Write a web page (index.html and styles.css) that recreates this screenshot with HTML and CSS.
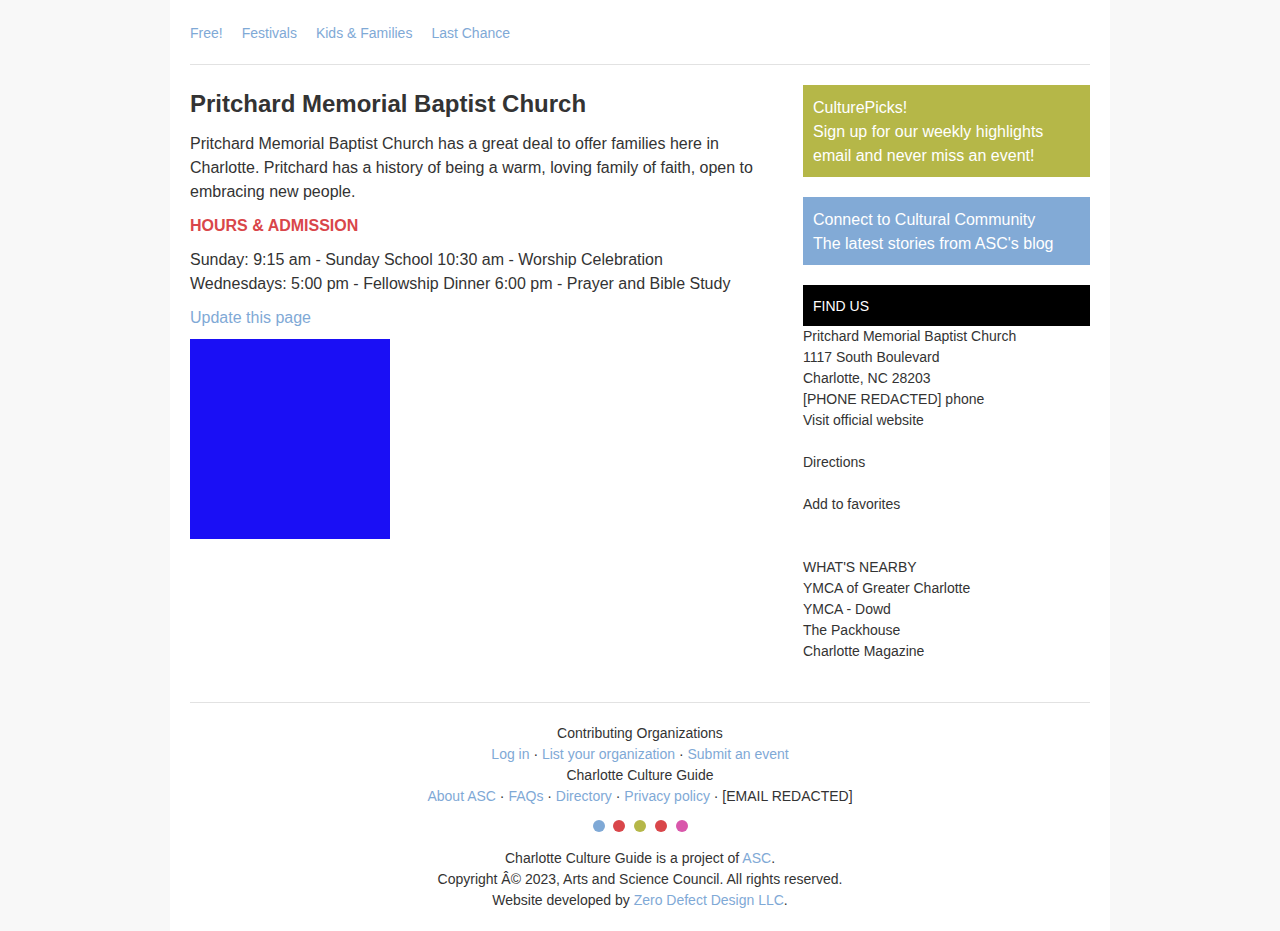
FILE: index.html
```html
<!DOCTYPE html>
<html lang="en">
<head>
<meta charset="utf-8">
<title>Pritchard Memorial Baptist Church</title>
<link rel="stylesheet" href="styles.css">
</head>
<body>
<div class="page">
  <nav class="topnav">
    <a href="#">Free!</a>
    <a href="#">Festivals</a>
    <a href="#">Kids &amp; Families</a>
    <a href="#">Last Chance</a>
  </nav>
  <div class="main">
    <div class="content">
      <h1 class="title">Pritchard Memorial Baptist Church</h1>
      <p class="text">Pritchard Memorial Baptist Church has a great deal to offer families here in Charlotte. Pritchard has a history of being a warm, loving family of faith, open to embracing new people.</p>
      <h2 class="hours-head">HOURS &amp; ADMISSION</h2>
      <p class="text">Sunday: 9:15 am - Sunday School 10:30 am - Worship Celebration<br>Wednesdays: 5:00 pm - Fellowship Dinner 6:00 pm - Prayer and Bible Study</p>
      <p class="text"><a href="#" class="link">Update this page</a></p>
      <div class="photo"></div>
    </div>
    <aside class="sidebar">
      <div class="promo promo-green">CulturePicks!<br>Sign up for our weekly highlights email and never miss an event!</div>
      <div class="promo promo-blue">Connect to Cultural Community<br>The latest stories from ASC's blog</div>
      <div class="findus">FIND US</div>
      <div class="info">
        Pritchard Memorial Baptist Church<br>
        1117 South Boulevard<br>
        Charlotte, NC 28203<br>
        [PHONE REDACTED] phone<br>
        Visit official website<br>
        <br>
        Directions<br>
        <br>
        Add to favorites<br>
        <br>
        <br>
        WHAT'S NEARBY<br>
        YMCA of Greater Charlotte<br>
        YMCA - Dowd<br>
        The Packhouse<br>
        Charlotte Magazine
      </div>
    </aside>
  </div>
  <footer class="footer">
    <div>Contributing Organizations</div>
    <div><a href="#" class="link">Log in</a> · <a href="#" class="link">List your organization</a> · <a href="#" class="link">Submit an event</a></div>
    <div>Charlotte Culture Guide</div>
    <div><a href="#" class="link">About ASC</a> · <a href="#" class="link">FAQs</a> · <a href="#" class="link">Directory</a> · <a href="#" class="link">Privacy policy</a> · [EMAIL REDACTED]</div>
    <div class="dots">
      <span class="dot dot-blue"></span>
      <span class="dot dot-red"></span>
      <span class="dot dot-green"></span>
      <span class="dot dot-red"></span>
      <span class="dot dot-pink"></span>
    </div>
    <div>Charlotte Culture Guide is a project of <a href="#" class="link">ASC</a>.</div>
    <div>Copyright Â© 2023, Arts and Science Council. All rights reserved.</div>
    <div>Website developed by <a href="#" class="link">Zero Defect Design LLC</a>.</div>
  </footer>
</div>
</body>
</html>
```
FILE: styles.css
```css
html, body {
  margin: 0;
  padding: 0;
}
body {
  background: #f8f8f8;
  font-family: "Liberation Sans", Arial, Helvetica, sans-serif;
  color: #333333;
}
a {
  text-decoration: none;
}
.page {
  width: 940px;
  margin: 0 auto;
  background: #ffffff;
  padding: 24px 20px 20px;
  min-height: 100vh;
  box-sizing: border-box;
}
.topnav {
  display: flex;
  gap: 19px;
  font-size: 14px;
  line-height: 18px;
  padding-bottom: 22px;
  border-bottom: 1px solid #e2e2e2;
}
.topnav a {
  color: #7fa9d6;
}
.main {
  display: flex;
  justify-content: space-between;
  padding-top: 20px;
  padding-bottom: 40px;
  border-bottom: 1px solid #e2e2e2;
}
.content {
  width: 590px;
  padding-top: 1px;
}
.title {
  font-size: 24px;
  line-height: 28px;
  font-weight: bold;
  margin: 4px 0 14px;
  color: #333333;
}
.text {
  font-size: 16px;
  line-height: 24px;
  margin: 0 0 10px;
}
.hours-head {
  font-size: 16px;
  line-height: 24px;
  font-weight: bold;
  color: #d9464a;
  margin: 0 0 10px;
}
.link {
  color: #7fa9d6;
}
.photo {
  width: 200px;
  height: 200px;
  margin-top: -1px;
  background: #1a0ff5;
}
.sidebar {
  width: 287px;
  display: flex;
  flex-direction: column;
}
.promo {
  color: #ffffff;
  font-size: 16px;
  line-height: 24px;
  padding: 11px 10px 9px;
  margin-bottom: 20px;
}
.promo-green {
  background: #b5b748;
}
.promo-blue {
  background: #82aad6;
}
.findus {
  background: #000000;
  color: #ffffff;
  font-size: 14px;
  line-height: 21px;
  padding: 11px 10px 9px;
}
.info {
  font-size: 14px;
  line-height: 21px;
}
.footer {
  text-align: center;
  font-size: 14px;
  line-height: 21px;
  padding-top: 20px;
}
.dots {
  display: flex;
  justify-content: center;
  gap: 8.75px;
  margin: 13px 0 16px;
}
.dot {
  width: 12px;
  height: 12px;
  border-radius: 50%;
  display: block;
}
.dot-blue { background: #7fa9d6; }
.dot-red { background: #d9464a; }
.dot-green { background: #b5b748; }
.dot-pink { background: #d957ab; }
```
